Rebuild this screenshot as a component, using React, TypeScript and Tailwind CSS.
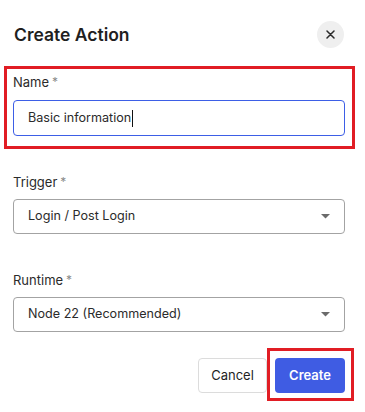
import React from "react";

function Caret() {
  return (
    <svg width="9" height="5" viewBox="0 0 9 5" className="shrink-0">
      <path d="M0 0 L9 0 L4.5 4.5 Z" fill="#6b6b6b" />
    </svg>
  );
}

function Label({ text }: { text: string }) {
  return (
    <div className="h-5 flex items-center text-[13px] leading-5 text-[#2b2b2b]">
      {text}
      <span className="ml-[3px] text-[#8a8a8a] text-[12px]">*</span>
    </div>
  );
}

function Select({ value }: { value: string }) {
  return (
    <div className="mt-[7px] h-[35px] rounded-[4px] border border-[#a3a3a3] flex items-center justify-between pl-[14px] pr-[14px] text-[12.6px] text-[#2b2b2b]">
      <span>{value}</span>
      <Caret />
    </div>
  );
}

export default function App() {
  return (
    <div
      className="w-[365px] h-[412px] bg-white pl-[13px] pr-[20px] pt-[21px] relative"
      style={{ fontFamily: "Inter, 'Noto Sans', sans-serif" }}
    >
      <div className="flex items-center justify-between">
        <h1 className="text-[17.5px] font-semibold text-[#1f1f1f] leading-[27px] ml-[1px]">Create Action</h1>
        <button className="w-[27px] h-[27px] rounded-full bg-[#efefef] flex items-center justify-center mr-[1px]">
          <svg width="9" height="9" viewBox="0 0 9 9">
            <path d="M1 1 L8 8 M8 1 L1 8" stroke="#2b2b2b" strokeWidth="1.5" strokeLinecap="round" />
          </svg>
        </button>
      </div>

      <div className="relative mt-[24px]">
        <div className="absolute top-[-6px] bottom-[-13px] left-[-9px] right-[-10px] border-[3px] border-[#e11d24] pointer-events-none" />
        <Label text="Name" />
        <div className="mt-[8px] h-[36px] rounded-[4px] border border-[#3d5ee6] flex items-center pl-[14px] text-[12.6px] text-[#2b2b2b]">
          <span>Basic information</span>
          <span className="w-px h-[17px] bg-[#111] ml-[1px]" />
        </div>
      </div>

      <div className="mt-[36px]">
        <Label text="Trigger" />
        <Select value="Login / Post Login" />
      </div>

      <div className="mt-[36px]">
        <Label text="Runtime" />
        <Select value="Node 22 (Recommended)" />
      </div>

      <div className="mt-[26px] flex justify-end gap-[8px]">
        <button className="h-[35px] w-[69px] rounded-[4px] border border-[#dcdcdc] bg-white text-[13px] text-[#1f1f1f]">
          Cancel
        </button>
        <div className="relative">
          <div className="absolute top-[-10px] bottom-[-8px] left-[-8px] right-[-9px] border-[3px] border-[#e11d24] pointer-events-none" />
          <button className="h-[35px] w-[70px] rounded-[4px] bg-[#3f5ce3] text-white font-semibold text-[13px]">
            Create
          </button>
        </div>
      </div>
    </div>
  );
}
